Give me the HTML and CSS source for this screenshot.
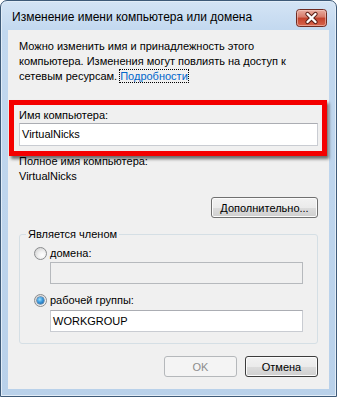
FILE: index.html
```html
<!DOCTYPE html>
<html lang="ru">
<head>
  <meta charset="UTF-8" />
  <title>Изменение имени компьютера или домена</title>
  <link rel="stylesheet" href="styles.css">
</head>
<body>
  <div class="window">
    <div class="titlebar">
      <span class="title">Изменение имени компьютера или домена</span>
      <button class="close" aria-label="Закрыть">
        <svg width="31" height="18" viewBox="0 0 31 18">
          <defs>
            <linearGradient id="closeGrad" x1="0" y1="0" x2="0" y2="1">
              <stop offset="0" stop-color="#eab0a3" />
              <stop offset="0.45" stop-color="#d77a69" />
              <stop offset="0.5" stop-color="#c2412b" />
              <stop offset="1" stop-color="#d9674f" />
            </linearGradient>
          </defs>
          <rect x="0.5" y="0.5" width="30" height="17" rx="3" fill="url(#closeGrad)" stroke="#6e2b22" />
          <rect x="1.5" y="1.5" width="28" height="15" rx="2" fill="none" stroke="#f6d2c8" stroke-opacity="0.55" />
          <path d="M11.5 5 L19.5 13 M19.5 5 L11.5 13" stroke="#5a1f17" stroke-width="4.4" stroke-linecap="round" />
          <path d="M11.5 5 L19.5 13 M19.5 5 L11.5 13" stroke="#ffffff" stroke-width="2.4" stroke-linecap="round" />
        </svg>
      </button>
    </div>

    <div class="client">
      <p class="intro">Можно изменить имя и принадлежность этого<br>компьютера. Изменения могут повлиять на доступ к<br>сетевым ресурсам. <a class="link" href="#">Подробности</a></p>

      <label class="field-label first" for="computer-name">Имя компьютера:</label>
      <div class="textbox name" id="computer-name">VirtualNicks</div>

      <div class="field-label">Полное имя компьютера:</div>
      <div class="value">VirtualNicks</div>

      <button class="btn more">Дополнительно...</button>

      <fieldset class="group">
        <legend>Является членом</legend>
        <div class="radio-row"><span class="radio"></span>домена:</div>
        <div class="textbox inset disabled"></div>
        <div class="radio-row second"><span class="radio checked"></span>рабочей группы:</div>
        <div class="textbox inset workgroup">WORKGROUP</div>
      </fieldset>

      <div class="actions">
        <button class="btn" disabled>OK</button>
        <button class="btn default">Отмена</button>
      </div>

      <div class="highlight"></div>
    </div>
  </div>
</body>
</html>
```

FILE: styles.css
```css
body {
  margin: 0;
  font-family: "Liberation Sans", Arial, sans-serif;
  font-size: 12px;
  color: #000;
}
.window {
  width: 337px;
  height: 397px;
  box-sizing: border-box;
  border: 1px solid #3e5a78;
  border-radius: 7px 7px 0 0;
  background: linear-gradient(#d4e4f5, #c2d8ef 30px, #b9d1ea);
  box-shadow: inset 0 0 0 1px #e2edf8;
  padding: 0 7px 7px;
  display: flex;
  flex-direction: column;
}
.titlebar {
  height: 29px;
  display: flex;
  justify-content: space-between;
  align-items: flex-start;
  flex-shrink: 0;
}
.title {
  padding: 9px 0 0 4px;
  line-height: 15px;
}
.close {
  margin: 8px 2px 0 0;
  padding: 0;
  border: 0;
  background: none;
  width: 31px;
  height: 18px;
  display: block;
}
.close svg {
  display: block;
}
.client {
  flex: 1;
  position: relative;
  background: #f0f0f0;
  padding: 9px 11px 12px;
  display: flex;
  flex-direction: column;
  font-size: 11px;
  line-height: 15px;
}
.intro {
  margin: 0;
}
.link {
  color: #0066cc;
  text-decoration: none;
  outline: 1px dotted #000;
  outline-offset: 0;
}
.field-label {
  margin-top: 8px;
}
.field-label.first {
  margin-top: 24px;
}
.textbox {
  box-sizing: border-box;
  height: 23px;
  background: #fff;
  border: 1px solid #c9ccd2;
  border-top-color: #abadb3;
  padding: 0 2px;
  line-height: 21px;
}
.textbox.inset {
  height: 22px;
  line-height: 20px;
  margin-left: 16px;
  margin-top: 1px;
}
.textbox.workgroup {
  margin-top: 2px;
}
.textbox.disabled {
  background: #f0f0f0;
  border-color: #b6b9bd;
}
.btn {
  box-sizing: border-box;
  height: 21px;
  width: 73px;
  padding: 0;
  font-family: inherit;
  font-size: 11px;
  color: #000;
  border: 1px solid #707070;
  border-radius: 3px;
  background: linear-gradient(#f2f2f2 0%, #ebebeb 50%, #dddddd 50%, #cfcfcf 100%);
  box-shadow: inset 0 0 0 1px #fbfbfb;
}
.btn:disabled {
  color: #8d8d8d;
  border-color: #b5b8bb;
  background: #f4f4f4;
  box-shadow: none;
}
.btn.default {
  border-color: #3c3c3c;
}
.more {
  align-self: flex-end;
  width: 107px;
  margin-top: 13px;
}
.group {
  margin: 9px 0 0;
  padding: 0 14px 11px;
  border: 1px solid #d5dfe5;
  border-radius: 3px;
  min-width: 0;
}
.group legend {
  padding: 0 2px;
  margin-left: -8px;
  line-height: 15px;
}
.radio-row {
  display: flex;
  align-items: center;
  gap: 3px;
  height: 15px;
  margin-top: 4px;
}
.radio-row.second {
  margin-top: 9px;
}
.radio {
  box-sizing: border-box;
  width: 13px;
  height: 13px;
  border-radius: 50%;
  border: 1px solid #8a8c8e;
  background: radial-gradient(circle at 65% 65%, #ffffff 0, #f2f2f2 35%, #c9c9c9 100%);
  position: relative;
  flex-shrink: 0;
}
.radio.checked::after {
  content: "";
  position: absolute;
  left: 2px;
  top: 2px;
  width: 7px;
  height: 7px;
  border-radius: 50%;
  background: radial-gradient(circle at 40% 35%, #9be0ff 0, #3c9ade 45%, #0f4d8c 100%);
  box-shadow: 0 0 0 0.5px #1b4f80;
}
.actions {
  display: flex;
  justify-content: flex-end;
  gap: 8px;
  margin-top: 12px;
}
.highlight {
  position: absolute;
  left: 1px;
  top: 70px;
  width: 318px;
  height: 56px;
  box-sizing: border-box;
  border: 5px solid #f40000;
  box-shadow: 2px 3px 3px rgba(0, 0, 0, 0.55);
}
```
